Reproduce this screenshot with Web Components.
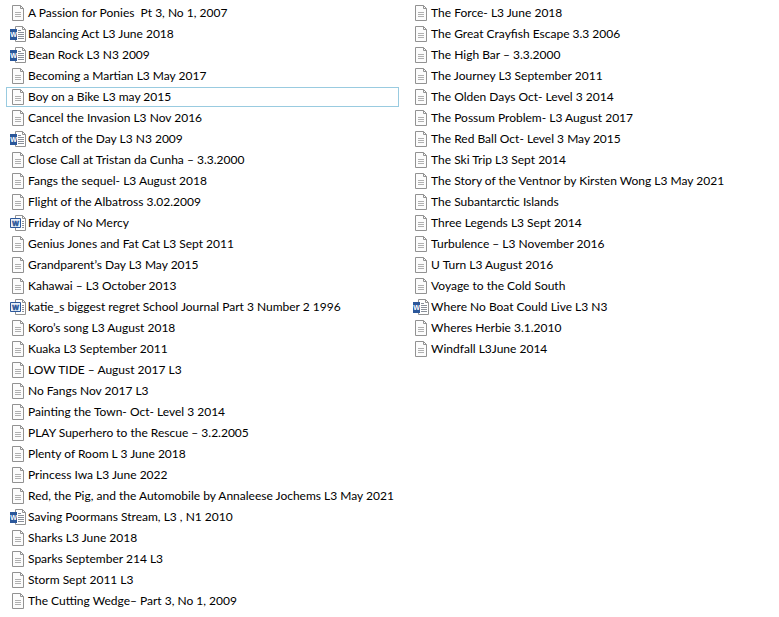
<!DOCTYPE html><html lang="en-NZ">
<head><meta charset="utf-8">
<title>School Journal stories</title>
<style>
  body { margin: 0; background: #fff; color: #000; font: 12px/20px Lato, Roboto, sans-serif; }
</style>

<template id="file-icon-template">
  <style>
    :host { display: block; width: 16px; height: 16px; flex: none; }
    svg { display: none; width: 16px; height: 16px; }
    :host([kind="text"]) .text,
    :host([kind="word"]) .word,
    :host([kind="doc"]) .doc { display: block; }
    text { font: bold 7px "Liberation Sans", sans-serif; text-anchor: middle; }
  </style>
  <svg class="text" viewBox="0 0 16 16" aria-hidden="true">
    <path d="M2.5.5h8l3 3v12h-11z" fill="#fcfcfc" stroke="#929292"/>
    <path d="M10.5.5v3h3" fill="none" stroke="#929292"/>
    <path d="M5 7.5h6M5 9.5h6M5 11.5h6" stroke="#b0b0b0"/>
  </svg>
  <svg class="word" viewBox="0 0 16 16" aria-hidden="true">
    <path d="M5.5.5h7l3 3v12h-10z" fill="#fff" stroke="#929292"/>
    <path d="M12.5.5v3h3" fill="none" stroke="#929292"/>
    <path d="M8 4.5h3M8 6.5h6M8 8.5h6M8 10.5h6M8 12.5h6" stroke="#8a9099"/>
    <path d="M0 3h7v11H0z" fill="#2b579a"/>
    <text x="3.5" y="11" fill="#fff">W</text>
  </svg>
  <svg class="doc" viewBox="0 0 16 16" aria-hidden="true">
    <path d="M5.5.5h7l3 3v12h-10z" fill="#fff" stroke="#929292"/>
    <path d="M12.5.5v3h3" fill="none" stroke="#929292"/>
    <path d="M7 4.5h4M12 6.5h2M12 8.5h2M12 10.5h2M12 12.5h2" stroke="#8a9099"/>
    <path d="M.5 3.5h10v9H.5z" fill="#e9f0f8" stroke="#2b579a"/>
    <text x="5.5" y="11" fill="#2b579a" stroke="#2b579a" stroke-width=".5">W</text>
  </svg>
</template>

<template id="file-item-template">
  <style>
    :host {
      display: flex;
      align-items: center;
      gap: 2px;
      box-sizing: border-box;
      height: 20px;
      padding: 0 3px;
      border: 1px solid transparent;
    }
    :host([selected]) { border-color: #99cbe0; }
    span { white-space: pre; }
  </style>
  <file-icon></file-icon>
  <span><slot></slot></span>
</template>

<template id="file-list-template">
  <style>
    :host {
      display: grid;
      grid-auto-flow: column;
      grid-template-rows: repeat(29, 20px);
      grid-template-columns: minmax(0, 13fr) minmax(0, 12fr);
      gap: 1px 10px;
      padding: 3px 7px 0 6px;
    }
  </style>
  <slot></slot>
</template>

</head><body>

<file-list>
  <file-item>A Passion for Ponies  Pt 3, No 1, 2007</file-item>
  <file-item kind="word">Balancing Act L3 June 2018</file-item>
  <file-item kind="word">Bean Rock L3 N3 2009</file-item>
  <file-item>Becoming a Martian L3 May 2017</file-item>
  <file-item selected>Boy on a Bike L3 may 2015</file-item>
  <file-item>Cancel the Invasion L3 Nov 2016</file-item>
  <file-item kind="word">Catch of the Day L3 N3 2009</file-item>
  <file-item>Close Call at Tristan da Cunha – 3.3.2000</file-item>
  <file-item>Fangs the sequel- L3 August 2018</file-item>
  <file-item>Flight of the Albatross 3.02.2009</file-item>
  <file-item kind="doc">Friday of No Mercy</file-item>
  <file-item>Genius Jones and Fat Cat L3 Sept 2011</file-item>
  <file-item>Grandparent’s Day L3 May 2015</file-item>
  <file-item>Kahawai – L3 October 2013</file-item>
  <file-item kind="doc">katie_s biggest regret School Journal Part 3 Number 2 1996</file-item>
  <file-item>Koro’s song L3 August 2018</file-item>
  <file-item>Kuaka L3 September 2011</file-item>
  <file-item>LOW TIDE – August 2017 L3</file-item>
  <file-item>No Fangs Nov 2017 L3</file-item>
  <file-item>Painting the Town- Oct- Level 3 2014</file-item>
  <file-item>PLAY Superhero to the Rescue – 3.2.2005</file-item>
  <file-item>Plenty of Room L 3 June 2018</file-item>
  <file-item>Princess Iwa L3 June 2022</file-item>
  <file-item>Red, the Pig, and the Automobile by Annaleese Jochems L3 May 2021</file-item>
  <file-item kind="word">Saving Poormans Stream, L3 , N1 2010</file-item>
  <file-item>Sharks L3 June 2018</file-item>
  <file-item>Sparks September 214 L3</file-item>
  <file-item>Storm Sept 2011 L3</file-item>
  <file-item>The Cutting Wedge– Part 3, No 1, 2009</file-item>
  <file-item>The Force- L3 June 2018</file-item>
  <file-item>The Great Crayfish Escape 3.3 2006</file-item>
  <file-item>The High Bar – 3.3.2000</file-item>
  <file-item>The Journey L3 September 2011</file-item>
  <file-item>The Olden Days Oct- Level 3 2014</file-item>
  <file-item>The Possum Problem- L3 August 2017</file-item>
  <file-item>The Red Ball Oct- Level 3 May 2015</file-item>
  <file-item>The Ski Trip L3 Sept 2014</file-item>
  <file-item>The Story of the Ventnor by Kirsten Wong L3 May 2021</file-item>
  <file-item>The Subantarctic Islands</file-item>
  <file-item>Three Legends L3 Sept 2014</file-item>
  <file-item>Turbulence – L3 November 2016</file-item>
  <file-item>U Turn L3 August 2016</file-item>
  <file-item>Voyage to the Cold South</file-item>
  <file-item kind="word">Where No Boat Could Live L3 N3</file-item>
  <file-item>Wheres Herbie 3.1.2010</file-item>
  <file-item>Windfall L3June 2014</file-item>
</file-list>

<script>{
const attach = ($el, id) => {
    const c = document.querySelector(id).content
    $el.attachShadow({ mode:'open' }).appendChild( c.cloneNode(true) )
}

customElements.define('file-icon',
    class extends HTMLElement {
        constructor() {
            super()
            attach(this, '#file-icon-template')
        }
    }
)

customElements.define('file-item',
    class extends HTMLElement {
        constructor() {
            super()
            attach(this, '#file-item-template')
        }
        connectedCallback() {
            this.setAttribute('role', 'option')
            this.setAttribute('aria-selected', this.hasAttribute('selected'))
            this.shadowRoot.querySelector('file-icon')
                .setAttribute('kind', this.getAttribute('kind') || 'text')
        }
    }
)

customElements.define('file-list',
    class extends HTMLElement {
        constructor() {
            super()
            attach(this, '#file-list-template')
        }
        connectedCallback() {
            this.setAttribute('role', 'listbox')
            this.setAttribute('aria-label', 'Files')
        }
    }
)
}</script>

</body></html>
